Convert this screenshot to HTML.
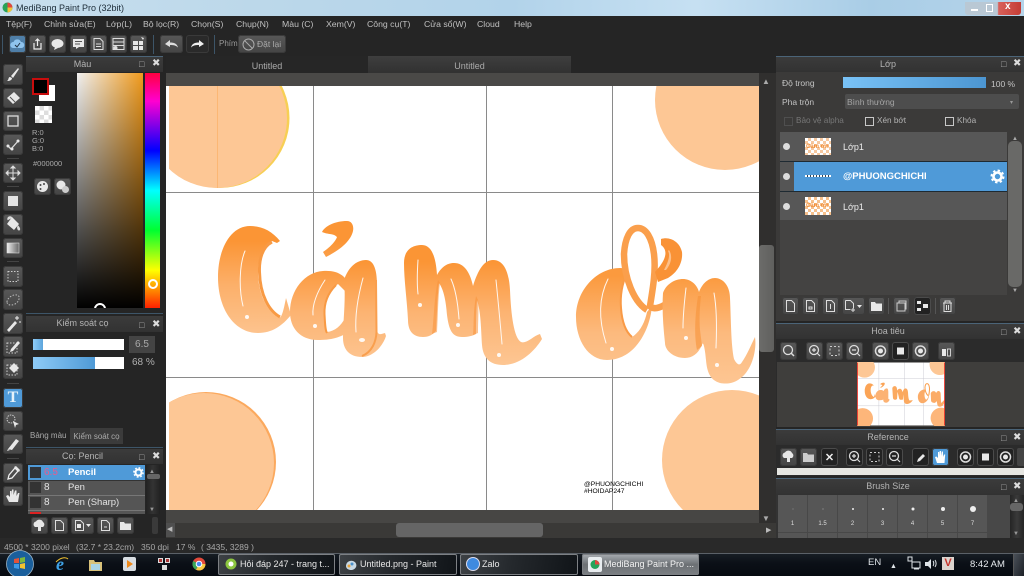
<!DOCTYPE html>
<html lang="vi"><head><meta charset="utf-8"><title>MediBang Paint Pro</title>
<style>
html,body{margin:0;padding:0;width:1024px;height:576px;overflow:hidden;background:#252525}
body{position:relative;font-family:"Liberation Sans","DejaVu Sans",sans-serif;font-size:9px;color:#b8b8b8;filter:blur(.3px)}
div,span,svg{position:absolute}
.t{white-space:nowrap;line-height:12px}
.b{background:linear-gradient(#585858,#444);border-radius:3px;box-shadow:inset 0 0 0 1px #3a3a3a}
.b svg{left:0;top:0;width:100%;height:100%}
.d{background:#222;box-shadow:inset 0 0 0 1px #4b4b4b;border-radius:3px}
.hd{background:linear-gradient(#3b3b3b,#323232);border-top:1px solid #4b6478;text-align:center;color:#b4b4b4;height:15px;line-height:15px;font-size:9px;padding-right:24px;box-sizing:content-box}
.ic{fill:#e8e8e8}
.m{top:18px;font-size:8.700px;color:#c0c0c0;line-height:13px;white-space:nowrap}
.tk{top:554px;height:21px;width:117px;border-radius:2px;box-shadow:inset 0 0 0 1px #7d8084;background:linear-gradient(100deg,#3d4145,#24282c 45%,#101418);color:#e8e8e8;font-size:9px;line-height:20px;white-space:nowrap}
.row{left:780px;width:227px;height:29px;background:#575757}
.cell{top:495px;width:29px;height:37px;background:#565656;text-align:center;color:#ddd;font-size:6px}
.cell i{position:absolute;left:50%;top:14px;background:#eee;border-radius:50%;transform:translate(-50%,-50%)}
.cell b{position:absolute;left:0;right:0;top:25px;font-weight:400;line-height:8px}
</style></head><body>

<!-- title bar -->
<div style="left:0;top:0;width:1024px;height:16px;background:linear-gradient(90deg,#c8dfee,#bcd8ea 25%,#b2d3ea 50%,#c6e0f2 68%,#a9cde6 85%,#b5d4ea)"></div>
<svg style="left:2px;top:2px" width="11" height="11" viewBox="0 0 11 11"><circle cx="5.500" cy="5.500" r="5" fill="#27a35a"/><path d="M5.500 5.500V.5a5 5 0 0 1 5 5z" fill="#e0483e"/><path d="M5.500 5.500h5a5 5 0 0 1-5 5z" fill="#f0c23a"/></svg>
<div class="t" style="left:16px;top:2px;color:#20303c;font-size:9px">MediBang Paint Pro (32bit)</div>
<div style="left:965px;top:2px;width:56px;height:13px;border-radius:0 0 3px 3px;background:linear-gradient(90deg,#b9c8d4 0,#b9c8d4 58%,#d8605a 60%,#c43d35)"></div>
<div class="t" style="left:1005px;top:1px;color:#fff;font-weight:700;font-size:10px">x</div>
<div style="left:971px;top:9px;width:7px;height:2px;background:#fff"></div>
<div style="left:986px;top:4px;width:5px;height:6px;border:1px solid #fff"></div>

<!-- menu -->
<div style="left:0;top:16px;width:1024px;height:17px;background:#252525"></div>
<div class="m" style="left:6px">Tệp(F)</div><div class="m" style="left:44px">Chỉnh sửa(E)</div><div class="m" style="left:106px">Lớp(L)</div><div class="m" style="left:143px">Bộ lọc(R)</div><div class="m" style="left:191px">Chọn(S)</div><div class="m" style="left:236px">Chụp(N)</div><div class="m" style="left:282px">Màu (C)</div><div class="m" style="left:326px">Xem(V)</div><div class="m" style="left:367px">Công cụ(T)</div><div class="m" style="left:424px">Cửa sổ(W)</div><div class="m" style="left:477px">Cloud</div><div class="m" style="left:514px">Help</div>

<!-- toolbar -->
<div style="left:2px;top:35px;width:1px;height:19px;background:#3d5568"></div>
<div class="b" style="left:9px;top:35px;width:17px;height:18px;background:#4f7fa8"><svg viewBox="0 0 17 18"><path d="M4 13a3 3 0 0 1 .5-6 4 4 0 0 1 7.500 0 3 3 0 0 1 .5 6z" fill="#8fc4ee"/><path d="M6 10l2 2 3-4" stroke="#234" fill="none"/></svg></div>
<div class="b" style="left:29px;top:35px;width:17px;height:18px"><svg viewBox="0 0 17 18"><path d="M5 8v6h7V8M8.500 11V4M6.500 6l2-2 2 2" stroke="#eee" stroke-width="1.200" fill="none"/></svg></div>
<div class="b" style="left:49px;top:35px;width:17px;height:18px"><svg viewBox="0 0 17 18"><ellipse cx="8.500" cy="8.500" rx="6" ry="4.500" class="ic"/><path d="M6 12l-1 3 4-2z" class="ic"/></svg></div>
<div class="b" style="left:70px;top:35px;width:17px;height:18px"><svg viewBox="0 0 17 18"><path d="M3 4h11v8H9l-3 2v-2H3z" class="ic"/><path d="M5 6.500h7M5 9h5" stroke="#555"/></svg></div>
<div class="b" style="left:90px;top:35px;width:17px;height:18px"><svg viewBox="0 0 17 18"><path d="M4 3.500h6l3 3v8H4z" fill="none" stroke="#ddd"/><path d="M6 9h5M6 11.500h5" stroke="#ddd"/></svg></div>
<div class="b" style="left:110px;top:35px;width:17px;height:18px"><svg viewBox="0 0 17 18"><path d="M3 3.500h11v11H3zM3 7h11M3 10.500h11" fill="none" stroke="#ddd"/><circle cx="5.500" cy="13" r="2" fill="#ddd"/></svg></div>
<div class="b" style="left:130px;top:35px;width:17px;height:18px"><svg viewBox="0 0 17 18"><path d="M3 6h5v4H3zM9 6h4v4H9zM3 11h5v4H3zM9 11h4v4H9z" class="ic"/><path d="M11 2l3 1-1 2z" class="ic"/></svg></div>
<div style="left:153px;top:35px;width:1px;height:19px;background:#3d5568"></div>
<div class="b" style="left:160px;top:35px;width:23px;height:18px"><svg viewBox="0 0 23 18"><path d="M5 9l5-4v2.500c4 0 7 1 8 5-2-2-4-2.500-8-2.500V12z" fill="#ddd"/></svg></div>
<div class="b" style="left:186px;top:35px;width:23px;height:18px;background:#2a2a2a"><svg viewBox="0 0 23 18"><path d="M18 9l-5-4v2.500c-4 0-7 1-8 5 2-2 4-2.500 8-2.500V12z" fill="#eee"/></svg></div>
<div style="left:214px;top:35px;width:1px;height:19px;background:#3d5568"></div>
<div class="t" style="left:219px;top:38px;font-size:8px;color:#999">Phím</div>
<div class="b" style="left:238px;top:35px;width:48px;height:18px"></div>
<svg style="left:242px;top:38px" width="13" height="13" viewBox="0 0 13 13"><circle cx="6.500" cy="6.500" r="5.500" fill="none" stroke="#aaa"/><path d="M2.500 2.500l8 8" stroke="#aaa"/></svg>
<div class="t" style="left:257px;top:38px;font-size:8.500px;color:#aaa">Đặt lại</div>

<!-- left tools -->
<div class="b" style="left:3px;top:64px;width:20px;height:21px"><svg viewBox="0 0 20 21"><path d="M15 4L8 12l2 2 6-9zM4 17c3 0 5-1 5-3l-2-1c-2 0-1 3-3 4z" class="ic"/></svg></div>
<div class="b" style="left:3px;top:88px;width:20px;height:20px"><svg viewBox="0 0 20 20"><path d="M11 4l6 6-7 6-6-6z" class="ic"/><path d="M7 9l5 5" stroke="#555"/></svg></div>
<div class="b" style="left:3px;top:111px;width:20px;height:20px"><svg viewBox="0 0 20 20"><rect x="5" y="5" width="10" height="10" fill="none" stroke="#ddd" stroke-width="1.300"/></svg></div>
<div class="b" style="left:3px;top:134px;width:20px;height:21px"><svg viewBox="0 0 20 21"><path d="M4 11l4 4 8-9" fill="none" stroke="#ddd" stroke-width="1.300"/><circle cx="5" cy="12" r="1.500" class="ic"/><circle cx="9" cy="15" r="1.500" class="ic"/><circle cx="15" cy="7" r="1.500" class="ic"/></svg></div>
<div class="b" style="left:3px;top:163px;width:20px;height:20px"><svg viewBox="0 0 20 20"><path d="M10 3v14M3 10h14M10 3l-2 2h4zM10 17l-2-2h4zM3 10l2-2v4zM17 10l-2-2v4z" stroke="#ddd" fill="#ddd"/></svg></div>
<div class="b" style="left:3px;top:191px;width:20px;height:20px"><svg viewBox="0 0 20 20"><rect x="5" y="5" width="10" height="10" fill="#e4e4e4"/></svg></div>
<div class="b" style="left:3px;top:214px;width:20px;height:21px"><svg viewBox="0 0 20 21"><path d="M9 3l7 7-5 6-7-6z" class="ic"/><path d="M15 12c2 2 2 4 1 4s-2-2-1-4zM5 6a2 2 0 0 1 4-2" stroke="#ddd" fill="#ddd"/></svg></div>
<div class="b" style="left:3px;top:238px;width:20px;height:20px"><svg viewBox="0 0 20 20"><defs><linearGradient id="gg" x1="0" x2="1"><stop offset="0" stop-color="#eee"/><stop offset="1" stop-color="#666"/></linearGradient></defs><rect x="4" y="5" width="12" height="10" fill="url(#gg)" stroke="#ddd" stroke-width=".6"/></svg></div>
<div class="b" style="left:3px;top:266px;width:20px;height:21px"><svg viewBox="0 0 20 21"><rect x="5" y="5.500" width="10" height="10" fill="none" stroke="#ccc" stroke-dasharray="1.500 1.500"/></svg></div>
<div class="b" style="left:3px;top:289px;width:20px;height:21px"><svg viewBox="0 0 20 21"><path d="M4 13c0-4 6-8 10-7s2 7-2 9-8 1-8-2z" fill="none" stroke="#bbb" stroke-dasharray="1.500 1.500"/></svg></div>
<div class="b" style="left:3px;top:313px;width:20px;height:21px"><svg viewBox="0 0 20 21"><path d="M4 17L12 8l2 2-8 9z" class="ic"/><path d="M14 3v4M12 5h4M17 8v2" stroke="#eee"/></svg></div>
<div class="b" style="left:3px;top:336px;width:20px;height:21px"><svg viewBox="0 0 20 21"><rect x="4" y="7" width="10" height="10" fill="none" stroke="#ccc" stroke-dasharray="1.500 1.500"/><path d="M8 13l7-8 2 2-7 8-3 1z" class="ic"/></svg></div>
<div class="b" style="left:3px;top:358px;width:20px;height:21px"><svg viewBox="0 0 20 21"><rect x="4" y="7" width="10" height="10" fill="none" stroke="#ccc" stroke-dasharray="1.500 1.500"/><path d="M11 5l5 5-5 5-5-5z" class="ic"/></svg></div>
<div class="b" style="left:3px;top:388px;width:20px;height:20px;background:#4f9ad8"><div class="t" style="left:0;top:2px;width:20px;text-align:center;font:700 16px/16px 'Liberation Serif',serif;color:#e6f2fa">T</div></div>
<div class="b" style="left:3px;top:411px;width:20px;height:20px"><svg viewBox="0 0 20 20"><circle cx="8" cy="8" r="4" fill="none" stroke="#ccc" stroke-dasharray="1.500 1"/><path d="M10 10l6 3-3 1-1 3z" class="ic"/></svg></div>
<div class="b" style="left:3px;top:434px;width:20px;height:20px"><svg viewBox="0 0 20 20"><path d="M5 15L13 5l3 2-7 9z" class="ic"/><path d="M5 15l-1 2 3-1z" class="ic"/></svg></div>
<div class="b" style="left:3px;top:463px;width:20px;height:20px"><svg viewBox="0 0 20 20"><path d="M5 16l1-4 6-7 3 3-6 7z" fill="none" stroke="#eee" stroke-width="1.300"/><path d="M11 4l2-1 4 4-1 2z" class="ic"/></svg></div>
<div class="b" style="left:3px;top:486px;width:20px;height:20px"><svg viewBox="0 0 20 20"><path d="M6 16l-3-6 2-1 2 2V5h1.500v4L9 3.500h1.500V9L12 4.500h1.500V10l1.500-3h1.500L15 16z" class="ic"/></svg></div>
<div style="left:7px;top:158px;width:12px;height:1px;background:#444"></div><div style="left:7px;top:186px;width:12px;height:1px;background:#444"></div><div style="left:7px;top:261px;width:12px;height:1px;background:#444"></div><div style="left:7px;top:383px;width:12px;height:1px;background:#444"></div><div style="left:7px;top:458px;width:12px;height:1px;background:#444"></div>

<!-- colour panel -->
<div class="hd" style="left:26px;top:56px;width:113px">Màu</div>
<div class="t" style="left:139px;top:58px;color:#aaa;font-size:9px">&#9633;</div><div class="t" style="left:152px;top:58px;color:#ddd;font-weight:700;font-size:10px">✖</div>
<div style="left:39px;top:85px;width:16px;height:16px;background:#fff"></div>
<div style="left:32px;top:78px;width:13px;height:13px;background:#000;border:2px solid #c80d0d"></div>
<div style="left:35px;top:106px;width:17px;height:17px;background:conic-gradient(#ddd 25%,#fff 0 50%,#ddd 0 75%,#fff 0) 0 0/9px 9px"></div>
<div class="t" style="left:32px;top:129px;font-size:7.500px;line-height:8px;color:#aaa">R:0<br>G:0<br>B:0</div>
<div class="t" style="left:33px;top:158px;font-size:7.500px;color:#aaa">#000000</div>
<div class="b" style="left:34px;top:178px;width:17px;height:17px"><svg viewBox="0 0 17 17"><circle cx="8.500" cy="8.500" r="5.500" class="ic"/><circle cx="6.500" cy="7" r="1" fill="#444"/><circle cx="10" cy="6" r="1" fill="#444"/><circle cx="6.500" cy="11" r="1" fill="#444"/></svg></div>
<div class="b" style="left:54px;top:178px;width:17px;height:17px"><svg viewBox="0 0 17 17"><circle cx="7" cy="7" r="4.500" class="ic"/><circle cx="11.500" cy="11.500" r="3.500" fill="#ccc"/></svg></div>
<div style="left:77px;top:73px;width:66px;height:235px;background:linear-gradient(transparent,#000),linear-gradient(90deg,#f0f0f0,#f09a1c)"></div>
<div style="left:145px;top:73px;width:15px;height:235px;background:linear-gradient(#ff0040,#ff00d0 12%,#0000ff 33%,#00ffff 50%,#00ff30 67%,#ffff00 84%,#ff2000)"></div>
<div style="left:148px;top:279px;width:6px;height:6px;border:2px solid #fff;border-radius:50%"></div>
<div style="left:94px;top:303px;width:12px;height:5px;overflow:hidden"><div style="left:0;top:0;width:8px;height:8px;border:2px solid #fff;border-radius:50%"></div></div>
<div style="left:26px;top:313px;width:137px;height:1px;background:#3d5568"></div>

<!-- brush control -->
<div class="hd" style="left:26px;top:316px;width:113px;height:16px;border:0;font-size:9px">Kiểm soát cọ</div>
<div class="t" style="left:139px;top:319px;color:#aaa">&#9633;</div><div class="t" style="left:152px;top:319px;color:#ddd;font-weight:700;font-size:10px">✖</div>
<div style="left:33px;top:339px;width:91px;height:11px;background:#fff"></div><div style="left:33px;top:339px;width:10px;height:11px;background:linear-gradient(90deg,#8ecbf7,#5da5dc)"></div>
<div style="left:129px;top:336px;width:26px;height:17px;background:#444;text-align:center;line-height:17px;font-size:10px;color:#aaa">6.5</div>
<div style="left:33px;top:357px;width:91px;height:12px;background:#fff"></div><div style="left:33px;top:357px;width:62px;height:12px;background:linear-gradient(90deg,#8ecbf7,#4f9ad6)"></div>
<div class="t" style="left:132px;top:357px;font-size:10px;color:#b0b0b0">68 %</div>
<div class="t" style="left:30px;top:430px;font-size:8px;color:#aaa">Bảng màu</div>
<div style="left:70px;top:428px;width:53px;height:16px;background:#3b3b3b;text-align:center;line-height:18px;font-size:8px;color:#aaa;white-space:nowrap">Kiểm soát cọ</div>

<!-- brush list -->
<div style="left:26px;top:447px;width:137px;height:1px;background:#3d5568"></div>
<div class="hd" style="left:26px;top:449px;width:113px;border:0">Cọ: Pencil</div>
<div class="t" style="left:139px;top:451px;color:#aaa">&#9633;</div><div class="t" style="left:152px;top:451px;color:#ddd;font-weight:700;font-size:10px">✖</div>
<div style="left:28px;top:465px;width:117px;height:49px;background:#555"></div>
<div style="left:28px;top:465px;width:117px;height:15px;background:#4f9ad8"></div>
<div style="left:28px;top:480px;width:117px;height:1px;background:#333"></div><div style="left:28px;top:495px;width:117px;height:1px;background:#777"></div><div style="left:28px;top:510px;width:117px;height:1px;background:#777"></div>
<div style="left:30px;top:467px;width:11px;height:11px;background:#30343a"></div><div style="left:30px;top:482px;width:11px;height:11px;background:#333"></div><div style="left:30px;top:497px;width:11px;height:11px;background:#333"></div><div style="left:30px;top:512px;width:11px;height:2px;background:#d22"></div>
<div class="t" style="left:44px;top:467px;font-size:10px;color:#e85b8d">6.5</div><div class="t" style="left:68px;top:467px;font-size:9.500px;color:#fff;font-weight:700">Pencil</div>
<div class="t" style="left:44px;top:482px;font-size:10px;color:#e4e4e4">8</div><div class="t" style="left:68px;top:482px;font-size:9.500px;color:#e4e4e4">Pen</div>
<div class="t" style="left:44px;top:497px;font-size:10px;color:#e4e4e4">8</div><div class="t" style="left:68px;top:497px;font-size:9.500px;color:#e4e4e4">Pen (Sharp)</div>
<svg style="left:133px;top:467px" width="11" height="11" viewBox="0 0 11 11"><circle cx="5.500" cy="5.500" r="3" fill="none" stroke="#fff" stroke-width="2"/><circle cx="5.500" cy="5.500" r="4.600" fill="none" stroke="#fff" stroke-width="1.500" stroke-dasharray="1.800 1.800"/></svg>
<div style="left:146px;top:465px;width:14px;height:49px;background:linear-gradient(90deg,#222,#333,#222)"></div>
<div style="left:147px;top:474px;width:13px;height:5px;background:#666;border-radius:2px"></div>
<div class="t" style="left:149px;top:466px;font-size:6px;color:#999">▲</div><div class="t" style="left:149px;top:504px;font-size:6px;color:#999">▼</div>
<div class="b" style="left:31px;top:517px;width:17px;height:17px"><svg viewBox="0 0 17 17"><path d="M4 10a3 3 0 0 1 1-5.500 4 4 0 0 1 7 .5 3 3 0 0 1 0 5z" class="ic"/><path d="M7 9h3v5H7z" class="ic"/></svg></div>
<div class="b" style="left:51px;top:517px;width:17px;height:17px"><svg viewBox="0 0 17 17"><path d="M4.500 3.500h5l3 3v7h-8z" fill="none" stroke="#ddd"/></svg></div>
<div class="b" style="left:71px;top:517px;width:23px;height:17px"><svg viewBox="0 0 23 17"><path d="M4.500 3.500h5l3 3v7h-8z" fill="none" stroke="#ddd"/><rect x="6" y="7" width="4" height="4" class="ic"/><path d="M15 7h5l-2.500 3z" class="ic"/></svg></div>
<div class="b" style="left:97px;top:517px;width:17px;height:17px"><svg viewBox="0 0 17 17"><path d="M4.500 3.500h5l3 3v7h-8z" fill="none" stroke="#ddd"/><path d="M7 10h3" stroke="#ddd"/></svg></div>
<div class="b" style="left:117px;top:517px;width:17px;height:17px"><svg viewBox="0 0 17 17"><path d="M3 5h4l1 1.500h6V13H3z" class="ic"/></svg></div>
<div style="left:152px;top:517px;width:6px;height:17px;background:#3a3a3a;border-radius:2px"></div>

<!-- canvas area -->
<div style="left:166px;top:56px;width:202px;height:17px;background:#262626;border-bottom:0;text-align:center;line-height:20px;font-size:9px;color:#aaa">Untitled</div>
<div style="left:368px;top:56px;width:203px;height:17px;background:linear-gradient(#3e3e3e,#313131);text-align:center;line-height:20px;font-size:9px;color:#aaa">Untitled</div>
<div style="left:166px;top:73px;width:610px;height:13px;background:#4a4947"></div>
<div style="left:166px;top:86px;width:593px;height:424px;background:#fff"></div>
<svg style="left:166px;top:86px" width="593" height="424" viewBox="166 86 593 424">
<defs>
<linearGradient id="a1" gradientUnits="userSpaceOnUse" x1="0" y1="230" x2="0" y2="340"><stop offset=".1" stop-color="#fb9535"/><stop offset=".5" stop-color="#fcb06a"/><stop offset="1" stop-color="#fdc693"/></linearGradient>
<linearGradient id="a2" gradientUnits="userSpaceOnUse" x1="0" y1="250" x2="0" y2="365"><stop offset=".1" stop-color="#fb9535"/><stop offset=".55" stop-color="#fcb473"/><stop offset="1" stop-color="#fdc693"/></linearGradient>
<linearGradient id="a3" gradientUnits="userSpaceOnUse" x1="0" y1="270" x2="0" y2="385"><stop offset=".05" stop-color="#fb9a3e"/><stop offset=".55" stop-color="#fcba7e"/><stop offset="1" stop-color="#fdc693"/></linearGradient>
</defs>
<!-- top left circle -->
<circle cx="219.500" cy="118" r="70" fill="#f7cf55"/><circle cx="217" cy="118" r="70" fill="#fdc795"/>
<rect x="166" y="86" width="3" height="110" fill="#fff"/>
<path d="M217.500 86v102" stroke="#fbb36c" stroke-width=".8"/>
<circle cx="725" cy="100" r="70" fill="#fdc795"/>
<circle cx="206" cy="462" r="70" fill="#fba95e"/><circle cx="204" cy="463" r="70" fill="#fdc795"/>
<rect x="166" y="380" width="3" height="130" fill="#fff"/>
<circle cx="732" cy="460" r="70" fill="#fdc795"/>
<g stroke="#8a8a8a" stroke-width="1" fill="none">
<path d="M313.500 86v424M486.500 86v424M612.500 86v424M166 192.500h593M166 377.500h593"/>
</g>
<!-- Lettering -->
<g>
<path fill="url(#a1)" d="M280 241C272 231 262 226 250 226C230 226 218 250 218 277C218 310 235 333 258 333C272 333 282 326 291 315L286 298C284 308 282 318 279 318C268 312 258 295 258 272C258 258 262 245 272 241L277 243z"/>
<path fill="none" stroke="#f89a44" stroke-width="3" d="M272 242C262 247 259 260 259.500 272C260 295 269 311 280 317"/>
<path fill="url(#a1)" d="M323 252C332 246 336 240 337 237C333 233 329 235 322 232C325 226 335 221 347 221C352 221 354 226 353 231C351 240 342 249 326 257z"/>
<path fill="url(#a2)" fill-rule="evenodd" d="M323 271C338 270 348 276 350 290L350 330C342 338 330 340 318 340C300 340 290 328 290 312C290 290 305 272 323 271zM338 284C330 290 325 300 325 312C325 322 325 330 327 332C335 331 341 326 345 318L346 292z"/>
<path fill="none" stroke="#f89a44" stroke-width="2" d="M336 285C329 292 324 302 324.500 314C325 322 325 330 327 333"/>
<path fill="url(#a2)" d="M344 280C348 268 356 260 366 260C373 260 377 268 377 285L377 330C378 336 381 334 385 333L386 336C383 346 373 357 362 357C350 357 343 350 343 338C343 320 346 300 344 280z"/>
<path fill="none" stroke="#f99f4e" stroke-width="2" d="M376 280L376.500 332C376 342 372 352 362 356"/>
<path fill="url(#a2)" d="M404 263C404 250 412 245 422 245C432 245 436 258 437 275C442 266 448 263 454 263C464 263 470 272 473 286C478 270 484 260 493 260C504 260 509 272 510 290C511 315 514 338 521 342C527 344 533 336 540 334L542 339C534 352 520 365 503 365C490 365 483 358 482 345C481 330 481 312 477 300C476 315 476 328 476 334C472 336 468 337 462 337C452 337 449 330 447 315C446 302 444 290 439 283C437 300 437 318 436 331C432 335 429 337 423 337C413 337 408 331 408 320C407 300 404 280 404 263z"/>
<path fill="#f79238" opacity=".55" d="M438 280C434 298 434 318 432 334L437 332C438 315 438 298 440 283zM476 296C473 312 474 325 473 335L478 333C478 320 479 310 478 300z"/>
<path fill="url(#a3)" fill-rule="evenodd" d="M620 268C627 268 629 270 628 272C623 282 620 295 621 308C622 322 626 332 632 337C640 332 645 322 647 312L652 306C650 330 635 360 607 360C588 360 576 340 576 317C576 290 597 268 620 268z"/>
<path fill="none" stroke="#f99a46" stroke-width="2" d="M627 273C622 284 620 296 621 308C622 322 626 332 632 337"/>
<path d="M647 310C634 302 624 278 624 254C625 238 630 228 638 228C646 228 652 238 654 254C656 270 653 288 650 306C653 310 660 308 666 304" fill="none" stroke="#fa9f4c" stroke-width="6.500"/>
<path fill="#f99236" d="M661 239C670 236 680 242 682 252C683 262 678 272 668 278L658 282L655 272L660 266C666 258 668 250 661 245z"/>
<path fill="#fcc08a" d="M668 251C671 256 667 264 664 270L666 270C671 264 673 256 669 250z"/>
<path fill="url(#a3)" d="M663 293C666 284 675 279 683 279C690 279 697 284 699 292C702 284 708 278 715 278C723 278 730 286 730 298C731 320 731 345 734 359C737 365 740 366 742 362C747 355 751 345 755 337C757 350 752 372 738 380C732 384 725 384 720 383C710 380 707 372 706 360C705 348 703 340 702 345C698 354 692 358 685 358C673 358 665 350 665 343C663 325 662 308 663 293z"/>
<path fill="#f79238" opacity=".6" d="M698 296C695 315 694 335 697 350L702 346L700 330C699 318 700 305 701 296z"/>
<g fill="none" stroke="#fff" stroke-width="1" stroke-linecap="round" opacity=".9">
<path d="M245 251C239 265 239 290 243 306"/><path d="M325 280C317 292 312 305 313 315"/><path d="M363 278C357 300 355 318 356 332"/><path d="M418 260C417 275 417 285 418 294"/><path d="M451 279C456 290 458 305 459 319"/><path d="M496 280C498 300 500 320 502 344"/><path d="M608 279C600 295 597 315 606 343"/><path d="M686 288C684 305 683 320 683 328"/><path d="M714 293C718 315 716 345 716 348"/>
</g>
<g fill="#fff" opacity=".9"><circle cx="247" cy="317" r="2"/><circle cx="315" cy="326" r="2"/><ellipse cx="362" cy="340" rx="3" ry="2"/><circle cx="420" cy="305" r="2"/><circle cx="458" cy="325" r="2"/><circle cx="499" cy="355" r="2"/><circle cx="612" cy="349" r="2"/><circle cx="686" cy="338" r="2"/><circle cx="717" cy="365" r="2"/></g>
</g>
</svg>
<div class="t" style="left:584px;top:481px;color:#000;font-size:6.700px;line-height:7px">@PHUONGCHICHI<br>#HOIDAP247</div>

<!-- canvas scrollbars -->
<div style="left:759px;top:73px;width:17px;height:465px;background:#302f2e"></div>
<div style="left:759px;top:245px;width:15px;height:107px;background:linear-gradient(90deg,#6c6c6a,#60605e);border-radius:3px"></div>
<div class="t" style="left:762px;top:76px;font-size:8px;color:#aaa">▲</div><div class="t" style="left:762px;top:513px;font-size:8px;color:#aaa">▼</div>
<div style="left:166px;top:510px;width:593px;height:13px;background:#474644"></div>
<div style="left:166px;top:523px;width:610px;height:15px;background:#3a3937"></div>
<div style="left:396px;top:523px;width:147px;height:14px;background:#656565;border-radius:3px"></div>
<div style="left:166px;top:523px;width:9px;height:14px;background:#4f4f4f"></div><div class="t" style="left:167px;top:524px;font-size:7px;color:#bbb">◀</div>
<div class="t" style="left:766px;top:525px;font-size:7px;color:#bbb">▶</div>

<!-- right: layer panel -->
<div style="left:776px;top:56px;width:248px;height:265px;background:#3b3a39"></div>
<div class="hd" style="left:776px;top:56px;width:224px;padding-right:24px">Lớp</div>
<div class="t" style="left:1001px;top:58px;color:#aaa">&#9633;</div><div class="t" style="left:1013px;top:58px;color:#ddd;font-weight:700;font-size:10px">✖</div>
<div class="t" style="left:782px;top:77px;font-size:8.500px;color:#c4c4c4">Độ trong</div>
<div style="left:843px;top:77px;width:143px;height:11px;background:linear-gradient(90deg,#79c2f6,#4c96d2)"></div>
<div class="t" style="left:991px;top:78px;font-size:8.500px;color:#c4c4c4">100 %</div>
<div class="t" style="left:782px;top:96px;font-size:8.500px;color:#c4c4c4">Pha trộn</div>
<div style="left:845px;top:94px;width:174px;height:15px;background:#4d4d4d;border-radius:2px"></div>
<div class="t" style="left:847px;top:96px;font-size:8.500px;color:#a4a4a4">Bình thường</div><div class="t" style="left:1010px;top:97px;font-size:6px;color:#999">▾</div>
<div style="left:784px;top:117px;width:7px;height:7px;border:1px solid #4f4f4f"></div><div class="t" style="left:796px;top:115px;font-size:8.200px;color:#777">Bảo vệ alpha</div>
<div style="left:865px;top:117px;width:7px;height:7px;border:1px solid #c8c8c8"></div><div class="t" style="left:877px;top:115px;font-size:8.200px;color:#b4b4b4">Xén bớt</div>
<div style="left:945px;top:117px;width:7px;height:7px;border:1px solid #c8c8c8"></div><div class="t" style="left:957px;top:115px;font-size:8.200px;color:#b4b4b4">Khóa</div>
<div style="left:780px;top:132px;width:227px;height:163px;background:#444342"></div>
<div class="row" style="top:132px"></div>
<div class="row" style="top:162px;left:794px;width:213px;background:#4f9ad8"></div><div class="row" style="top:162px;width:14px;background:#555"></div>
<div class="row" style="top:192px;height:28px"></div>
<div style="left:780px;top:161px;width:227px;height:1px;background:#1e2a32"></div><div style="left:780px;top:191px;width:227px;height:1px;background:#1e2a32"></div>
<div style="left:783px;top:143px;width:7px;height:7px;background:#ddd;border-radius:50%"></div><div style="left:783px;top:173px;width:7px;height:7px;background:#ddd;border-radius:50%"></div><div style="left:783px;top:203px;width:7px;height:7px;background:#ddd;border-radius:50%"></div>
<div style="left:805px;top:138px;width:26px;height:17px;background:conic-gradient(#f6c8a0 25%,#fff 0 50%,#f6c8a0 0 75%,#fff 0) 0 0/6px 6px"></div><div class="t" style="left:806px;top:141px;font-size:6px;color:#f08a30;font-weight:700">Cảm ơn</div>
<div style="left:805px;top:175px;width:26px;height:2px;background:repeating-linear-gradient(90deg,#fff 0 2px,#345 2px 3px)"></div>
<div style="left:805px;top:197px;width:26px;height:18px;background:conic-gradient(#f6c08c 25%,#fff 0 50%,#f6c08c 0 75%,#fff 0) 0 0/6px 6px"></div><div class="t" style="left:806px;top:200px;font-size:6px;color:#f08a30;font-weight:700">Cảm ơn</div>
<div class="t" style="left:843px;top:141px;font-size:9px;color:#ececec">Lớp1</div>
<div class="t" style="left:843px;top:171px;font-size:9.500px;color:#fff;font-weight:700">@PHUONGCHICHI</div>
<div class="t" style="left:843px;top:201px;font-size:9px;color:#ececec">Lớp1</div>
<svg style="left:990px;top:169px" width="15" height="15" viewBox="0 0 15 15"><circle cx="7.500" cy="7.500" r="4" fill="none" stroke="#fff" stroke-width="2.600"/><circle cx="7.500" cy="7.500" r="6" fill="none" stroke="#fff" stroke-width="2" stroke-dasharray="2.400 2.300"/></svg>
<div class="t" style="left:1012px;top:133px;font-size:6px;color:#aaa">▲</div><div class="t" style="left:1012px;top:285px;font-size:6px;color:#aaa">▼</div>
<div style="left:1008px;top:141px;width:14px;height:146px;background:#696967;border-radius:5px"></div>
<div class="b" style="left:782px;top:297px;width:17px;height:18px"><svg viewBox="0 0 17 18"><path d="M4.500 3.500h5l3 3v8h-8z" fill="none" stroke="#ddd"/></svg></div>
<div class="b" style="left:802px;top:297px;width:17px;height:18px"><svg viewBox="0 0 17 18"><path d="M4.500 3.500h5l3 3v8h-8z" fill="none" stroke="#ddd"/><path d="M7 10h3v2H7z" stroke="#ddd" fill="none"/></svg></div>
<div class="b" style="left:822px;top:297px;width:17px;height:18px"><svg viewBox="0 0 17 18"><path d="M4.500 3.500h5l3 3v8h-8z" fill="none" stroke="#ddd"/><path d="M8.500 7v5" stroke="#ddd"/></svg></div>
<div class="b" style="left:842px;top:297px;width:23px;height:18px"><svg viewBox="0 0 23 18"><path d="M3.500 3.500h5l3 3v5M3.500 3.500v9h5" fill="none" stroke="#ddd"/><path d="M9 13h4M11 11v4" stroke="#ddd"/><path d="M15 8h5l-2.500 3z" class="ic"/></svg></div>
<div class="b" style="left:868px;top:297px;width:17px;height:18px"><svg viewBox="0 0 17 18"><path d="M3 5h4l1 1.500h6V14H3z" class="ic"/></svg></div>
<div style="left:888px;top:298px;width:1px;height:16px;background:#555"></div>
<div class="b" style="left:893px;top:297px;width:17px;height:18px"><svg viewBox="0 0 17 18"><rect x="4" y="6" width="8" height="8" fill="none" stroke="#ccc"/><path d="M6 6V4h7v8h-1" fill="none" stroke="#ccc"/></svg></div>
<div class="d" style="left:914px;top:297px;width:17px;height:18px"><svg style="left:0;top:0" viewBox="0 0 17 18" width="17" height="18"><path d="M3 4h4v3H3zM3 11h4v3H3zM9 7h5v4H9z" class="ic"/></svg></div>
<div style="left:935px;top:298px;width:1px;height:16px;background:#555"></div>
<div class="b" style="left:939px;top:297px;width:17px;height:18px"><svg viewBox="0 0 17 18"><path d="M4 6h9M6 6V4h5v2M5 6h7v8.500H5zM7.500 8v5M9.500 8v5" fill="none" stroke="#ddd"/></svg></div>

<!-- navigator -->
<div style="left:776px;top:323px;width:248px;height:104px;background:#2b2b2b"></div>
<div class="hd" style="left:776px;top:323px;width:224px">Hoa tiêu</div>
<div class="t" style="left:1001px;top:326px;color:#aaa">&#9633;</div><div class="t" style="left:1013px;top:326px;color:#ddd;font-weight:700;font-size:10px">✖</div>
<div class="b" style="left:780px;top:342px;width:17px;height:18px"><svg viewBox="0 0 17 18"><circle cx="8" cy="8" r="4.500" fill="none" stroke="#ddd" stroke-width="1.300"/><path d="M11 11l3 3" stroke="#ddd" stroke-width="1.500"/></svg></div>
<div class="b" style="left:806px;top:342px;width:17px;height:18px"><svg viewBox="0 0 17 18"><circle cx="8" cy="8" r="4.500" fill="none" stroke="#ddd" stroke-width="1.300"/><path d="M11 11l3 3M6 8h4M8 6v4" stroke="#ddd" stroke-width="1.200"/></svg></div>
<div class="b" style="left:826px;top:342px;width:17px;height:18px"><svg viewBox="0 0 17 18"><rect x="4" y="4.500" width="9" height="9" fill="none" stroke="#ccc" stroke-dasharray="2 2"/></svg></div>
<div class="b" style="left:846px;top:342px;width:17px;height:18px"><svg viewBox="0 0 17 18"><circle cx="8" cy="8" r="4.500" fill="none" stroke="#ddd" stroke-width="1.300"/><path d="M11 11l3 3M6 8h4" stroke="#ddd" stroke-width="1.200"/></svg></div>
<div class="b" style="left:872px;top:342px;width:17px;height:18px"><svg viewBox="0 0 17 18"><circle cx="8.500" cy="9" r="5" fill="none" stroke="#ddd" stroke-width="1.500"/><circle cx="8.500" cy="9" r="2.500" class="ic"/></svg></div>
<div class="d" style="left:892px;top:342px;width:17px;height:18px"><svg style="left:0;top:0" width="17" height="18" viewBox="0 0 17 18"><rect x="5" y="5.500" width="7" height="7" class="ic"/></svg></div>
<div class="b" style="left:912px;top:342px;width:17px;height:18px"><svg viewBox="0 0 17 18"><circle cx="8.500" cy="9" r="5" fill="none" stroke="#ddd" stroke-width="1.500"/><circle cx="8.500" cy="9" r="2.500" class="ic"/></svg></div>
<div class="b" style="left:938px;top:342px;width:17px;height:18px"><svg viewBox="0 0 17 18"><rect x="4" y="7" width="4" height="7" class="ic"/><rect x="9.500" y="7" width="3" height="7" fill="none" stroke="#ccc"/></svg></div>
<div style="left:777px;top:362px;width:247px;height:65px;background:#3f3e3c"></div>
<svg style="left:857px;top:362px" width="88" height="64" viewBox="166 86 593 424">
<rect x="166" y="86" width="593" height="424" fill="#fff"/>
<circle cx="217" cy="118" r="70" fill="#fdc795"/><circle cx="725" cy="100" r="70" fill="#fdc795"/><circle cx="204" cy="463" r="70" fill="#fdb67a"/><circle cx="732" cy="460" r="70" fill="#fdb67a"/>
<path d="M313.500 86v424M486.500 86v424M612.500 86v424M166 192.500h593M166 377.500h593" stroke="#c8c8d0" stroke-width="3" fill="none"/>
<g>
<path fill="#fba456" d="M280 241C272 231 262 226 250 226C230 226 218 250 218 277C218 310 235 333 258 333C272 333 282 326 291 315L286 298C284 308 282 318 279 318C268 312 258 295 258 272C258 258 262 245 272 241z"/>
<path fill="#fba456" d="M323 252C332 246 336 240 337 237L322 232C325 226 335 221 347 221C352 221 354 226 353 231C351 240 342 249 326 257z"/>
<path fill="#fcb273" d="M323 271C338 270 348 276 350 290L350 330C342 338 330 340 318 340C300 340 290 328 290 312C290 290 305 272 323 271z"/>
<path fill="#fcb273" d="M344 280C348 268 356 260 366 260C373 260 377 268 377 285L377 330L386 336C383 346 373 357 362 357C350 357 343 350 343 338z"/>
<path fill="#fba95f" d="M404 263C404 250 412 245 422 245C432 245 436 258 437 275C442 266 448 263 454 263C464 263 470 272 473 286C478 270 484 260 493 260C504 260 509 272 510 290C511 315 514 338 521 342L542 339C534 352 520 365 503 365C490 365 483 358 482 345L477 300L476 334C472 336 468 337 462 337C452 337 449 330 447 315L439 283L436 331C432 335 429 337 423 337C413 337 408 331 408 320z"/>
<path fill="#fbac68" d="M620 268C627 268 629 270 628 272C623 282 620 295 621 308C622 322 626 332 632 337C640 332 645 322 647 312L652 306C650 330 635 360 607 360C588 360 576 340 576 317C576 290 597 268 620 268z"/>
<path d="M647 310C634 302 624 278 624 254C625 238 630 228 638 228C646 228 652 238 654 254C656 270 653 288 650 306" fill="none" stroke="#fa9f4c" stroke-width="7"/>
<path fill="#fbac68" d="M663 293C666 284 675 279 683 279C690 279 697 284 699 292C702 284 708 278 715 278C723 278 730 286 730 298C731 320 731 345 734 359L755 337C757 350 752 372 738 380C732 384 725 384 720 383C710 380 707 372 706 360L702 345C698 354 692 358 685 358C673 358 665 350 665 343z"/>
</g>
<rect x="166" y="86" width="6" height="424" fill="#e8352b"/><rect x="753" y="86" width="6" height="424" fill="#e8352b"/>
</svg>

<!-- reference -->
<div style="left:776px;top:429px;width:248px;height:47px;background:#2b2b2b"></div>
<div class="hd" style="left:776px;top:429px;width:224px">Reference</div>
<div class="t" style="left:1001px;top:432px;color:#aaa">&#9633;</div><div class="t" style="left:1013px;top:432px;color:#ddd;font-weight:700;font-size:10px">✖</div>
<div class="b" style="left:780px;top:448px;width:17px;height:18px"><svg viewBox="0 0 17 18"><path d="M4 10a3 3 0 0 1 1-5.500 4 4 0 0 1 7 .5 3 3 0 0 1 0 5z" class="ic"/><path d="M7 9h3v5H7z" class="ic"/></svg></div>
<div class="b" style="left:800px;top:448px;width:17px;height:18px"><svg viewBox="0 0 17 18"><path d="M3 5h4l1 1.500h6V14H3z" fill="#ccc"/></svg></div>
<div class="d" style="left:821px;top:448px;width:17px;height:18px"><svg style="left:0;top:0" width="17" height="18" viewBox="0 0 17 18"><path d="M5.500 6l6 6M11.500 6l-6 6" stroke="#eee" stroke-width="1.500"/></svg></div>
<div class="d" style="left:846px;top:448px;width:17px;height:18px"><svg style="left:0;top:0" width="17" height="18" viewBox="0 0 17 18"><circle cx="8" cy="8" r="4.500" fill="none" stroke="#ddd" stroke-width="1.300"/><path d="M11 11l3 3M6 8h4M8 6v4" stroke="#ddd" stroke-width="1.200"/></svg></div>
<div class="d" style="left:866px;top:448px;width:17px;height:18px"><svg style="left:0;top:0" width="17" height="18" viewBox="0 0 17 18"><rect x="4" y="4.500" width="9" height="9" fill="none" stroke="#ccc" stroke-dasharray="2 2"/></svg></div>
<div class="d" style="left:886px;top:448px;width:17px;height:18px"><svg style="left:0;top:0" width="17" height="18" viewBox="0 0 17 18"><circle cx="8" cy="8" r="4.500" fill="none" stroke="#ddd" stroke-width="1.300"/><path d="M11 11l3 3M6 8h4" stroke="#ddd" stroke-width="1.200"/></svg></div>
<div class="d" style="left:912px;top:448px;width:17px;height:18px"><svg style="left:0;top:0" width="17" height="18" viewBox="0 0 17 18"><path d="M5 14l1-3 5-5 2 2-5 5z" class="ic"/></svg></div>
<div class="b" style="left:932px;top:448px;width:17px;height:18px;background:#4f9ad8"><svg viewBox="0 0 17 18"><path d="M5 15l-2-6 1.500-.5L6 10V4h1.200v4l.5-5H9v5l.8-4.500H11V9l1-2.500h1.200L12.500 15z" fill="#fff"/></svg></div>
<div class="d" style="left:957px;top:448px;width:17px;height:18px"><svg style="left:0;top:0" width="17" height="18" viewBox="0 0 17 18"><circle cx="8.500" cy="9" r="5" fill="none" stroke="#ddd" stroke-width="1.500"/><circle cx="8.500" cy="9" r="2.500" class="ic"/></svg></div>
<div class="d" style="left:977px;top:448px;width:17px;height:18px"><svg style="left:0;top:0" width="17" height="18" viewBox="0 0 17 18"><rect x="5" y="5.500" width="7" height="7" class="ic"/></svg></div>
<div class="d" style="left:997px;top:448px;width:17px;height:18px"><svg style="left:0;top:0" width="17" height="18" viewBox="0 0 17 18"><circle cx="8.500" cy="9" r="5" fill="none" stroke="#ddd" stroke-width="1.500"/><circle cx="8.500" cy="9" r="2.500" class="ic"/></svg></div>
<div style="left:1017px;top:448px;width:7px;height:18px;background:#444;border-radius:2px 0 0 2px"></div>
<div style="left:777px;top:468px;width:247px;height:7px;background:#e6e6e2"></div>

<!-- brush size -->
<div style="left:776px;top:478px;width:248px;height:60px;background:#333"></div>
<div class="hd" style="left:776px;top:478px;width:224px;height:16px">Brush Size</div>
<div class="t" style="left:1001px;top:481px;color:#aaa">&#9633;</div><div class="t" style="left:1013px;top:481px;color:#ddd;font-weight:700;font-size:10px">✖</div>
<div style="left:778px;top:495px;width:239px;height:43px;background:#484848"></div>
<div class="cell" style="left:778px"><i style="width:1px;height:1px;opacity:.5"></i><b>1</b></div>
<div class="cell" style="left:808px"><i style="width:1px;height:1px;opacity:.7"></i><b>1.5</b></div>
<div class="cell" style="left:838px"><i style="width:2px;height:2px"></i><b>2</b></div>
<div class="cell" style="left:868px"><i style="width:2px;height:2px"></i><b>3</b></div>
<div class="cell" style="left:898px"><i style="width:3px;height:3px"></i><b>4</b></div>
<div class="cell" style="left:928px"><i style="width:4px;height:4px"></i><b>5</b></div>
<div class="cell" style="left:958px"><i style="width:6px;height:6px"></i><b>7</b></div>
<div style="left:778px;top:533px;width:29px;height:5px;background:#565656"></div><div style="left:808px;top:533px;width:29px;height:5px;background:#565656"></div><div style="left:838px;top:533px;width:29px;height:5px;background:#565656"></div><div style="left:868px;top:533px;width:29px;height:5px;background:#565656"></div><div style="left:898px;top:533px;width:29px;height:5px;background:#565656"></div><div style="left:928px;top:533px;width:29px;height:5px;background:#565656"></div><div style="left:958px;top:533px;width:29px;height:5px;background:#565656"></div>
<div style="left:1010px;top:495px;width:14px;height:43px;background:linear-gradient(90deg,#242424,#3a3a3a,#242424)"></div>
<div style="left:1010px;top:503px;width:13px;height:8px;background:#666;border-radius:3px"></div>
<div class="t" style="left:1013px;top:495px;font-size:6px;color:#999">▲</div><div class="t" style="left:1013px;top:528px;font-size:6px;color:#999">▼</div>

<!-- status -->
<div style="left:0;top:538px;width:1024px;height:15px;background:#292929"></div>
<div class="t" style="left:4px;top:541px;font-size:8.500px;color:#a8a8a8">4500 * 3200 pixel</div>
<div class="t" style="left:76px;top:541px;font-size:8.500px;color:#a8a8a8">(32.7 * 23.2cm)</div>
<div class="t" style="left:141px;top:541px;font-size:8.500px;color:#a8a8a8">350 dpi</div>
<div class="t" style="left:176px;top:541px;font-size:8.500px;color:#a8a8a8">17 %</div>
<div class="t" style="left:201px;top:541px;font-size:8.500px;color:#a8a8a8">( 3435, 3289 )</div>

<!-- taskbar -->
<div style="left:0;top:553px;width:1024px;height:23px;background:linear-gradient(#171d24,#0b1017 40%,#060a10);border-top:1px solid #5b6168;box-sizing:border-box"></div>
<svg style="left:5px;top:550px" width="30" height="26" viewBox="0 0 30 26"><circle cx="15" cy="14" r="13.500" fill="#1a5f9c" stroke="#9ab4c8" stroke-width=".8"/><path d="M9 9l5-1v5H9z" fill="#e2543a"/><path d="M15 8l5-1v5l-5 1z" fill="#7db83c"/><path d="M9 14h5v5l-5-1z" fill="#3c9ae8"/><path d="M15 14l5-1v6l-5-1z" fill="#f4c430"/></svg>
<svg style="left:54px;top:556px" width="16" height="17" viewBox="0 0 16 17"><text x="2" y="14" font-family="Liberation Serif" font-style="italic" font-weight="700" font-size="18" fill="#3ea2e6">e</text><path d="M2 6c5-5 10-5 12-3" fill="none" stroke="#f4c430"/></svg>
<svg style="left:88px;top:557px" width="15" height="15" viewBox="0 0 15 15"><path d="M1 3h5l1 2h7v9H1z" fill="#d8c27a"/><rect x="3" y="7" width="9" height="6" fill="#a9d4e6"/></svg>
<svg style="left:122px;top:556px" width="15" height="16" viewBox="0 0 15 16"><rect x="1" y="1" width="13" height="14" rx="2" fill="#d7dde2"/><path d="M5 4l6 4-6 4z" fill="#ee8a1c"/></svg>
<svg style="left:157px;top:557px" width="14" height="14" viewBox="0 0 14 14"><path d="M1 1h5v5H1zM8 1h5v5H8zM5 8h5v5H5z" fill="#ddd"/><path d="M2 2h3v3H2zM9 2h3v3H9z" fill="#a33"/></svg>
<svg style="left:192px;top:557px" width="14" height="14" viewBox="0 0 14 14"><circle cx="7" cy="7" r="6.500" fill="#e2493b"/><path d="M7 7L13.500 7A6.500 6.500 0 0 1 4 12.800z" fill="#f7c840"/><path d="M7 7L4 12.800A6.500 6.500 0 0 1 1.200 4z" fill="#3aa757"/><circle cx="7" cy="7" r="2.800" fill="#4a8cf0" stroke="#fff"/></svg>
<div class="tk" style="left:218px"><svg style="left:7px;top:4px" width="12" height="12" viewBox="0 0 12 12"><circle cx="6" cy="6" r="5.500" fill="#8cc63f"/><circle cx="6" cy="6" r="2.500" fill="#fff"/></svg><span style="left:22px;top:0">Hỏi đáp 247 - trang t...</span></div>
<div class="tk" style="left:339px;width:118px"><svg style="left:6px;top:4px" width="13" height="13" viewBox="0 0 13 13"><path d="M1 8c0-4 4-6 7-5s4 4 3 6-3 3-5 3-5-1-5-4z" fill="#c8d8e4"/><circle cx="4" cy="8" r="1.500" fill="#e8a33a"/><circle cx="7" cy="6" r="1.500" fill="#4b90c8"/></svg><span style="left:21px;top:0">Untitled.png - Paint</span></div>
<div class="tk" style="left:460px;width:118px"><div style="left:7px;top:4px;width:12px;height:12px;background:#3f8ae0;border-radius:50%;box-shadow:0 0 0 1px #dde"></div><span style="left:22px;top:0">Zalo</span></div>
<div class="tk" style="left:582px;background:linear-gradient(#a8adb2,#6c7074 50%,#7c8084);color:#f4f4f4"><svg style="left:6px;top:3px" width="14" height="15" viewBox="0 0 14 15"><rect x="0" y="0" width="14" height="15" rx="2" fill="#e8ecef"/><circle cx="7" cy="7.500" r="4.500" fill="#27a35a"/><path d="M7 7.500V3a4.500 4.500 0 0 1 4.500 4.500z" fill="#e0483e"/></svg><span style="left:22px;top:0">MediBang Paint Pro ...</span></div>
<div class="t" style="left:868px;top:557px;font-size:9.500px;color:#dfe4e8">EN</div>
<div class="t" style="left:890px;top:561px;font-size:7px;color:#dfe4e8">▲</div>
<svg style="left:907px;top:556px" width="14" height="15" viewBox="0 0 14 15"><path d="M1 1h4v4H1zM5 6h8v6H5zM7 13h5" fill="none" stroke="#dfe4e8"/></svg>
<svg style="left:924px;top:557px" width="14" height="13" viewBox="0 0 14 13"><path d="M1 5h3l3-3v10L4 9H1z" fill="#dfe4e8"/><path d="M9 4c1 1 1 4 0 5M11 3c1.500 2 1.500 5 0 7" fill="none" stroke="#dfe4e8"/></svg>
<div style="left:942px;top:557px;width:12px;height:13px;background:#dcd5cf;color:#c6342c;font:700 11px/13px 'Liberation Sans',sans-serif;text-align:center">V</div>
<div class="t" style="left:970px;top:559px;font-size:9.500px;color:#e6eaee">8:42 AM</div>
<div style="left:1013px;top:554px;width:11px;height:22px;background:linear-gradient(110deg,#4a5058,#1a1e24);border-left:1px solid #555"></div>
</body></html>
